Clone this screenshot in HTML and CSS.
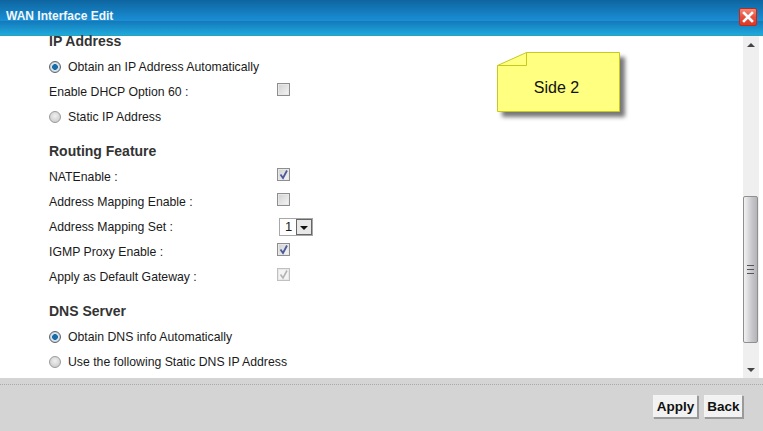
FILE: index.html
```html
<!DOCTYPE html>
<html lang="en">
<head>
  <meta charset="UTF-8" />
  <title>WAN Interface Edit</title>
  <link rel="stylesheet" href="styles.css">
</head>
<body>
  <div class="titlebar">
    <span class="title">WAN Interface Edit</span>
    <button class="close" aria-label="Close">
      <svg width="12" height="12" viewBox="0 0 12 12"><path d="M2 2 L10 10 M10 2 L2 10" stroke="#fff" stroke-width="2.6" stroke-linecap="square"/></svg>
    </button>
  </div>

  <div class="middle">
    <div class="content">
      <!-- IP Address -->
      <h2 class="first">IP Address</h2>
      <div class="row"><span class="radio on"></span><span>Obtain an IP Address Automatically</span></div>
      <div class="row"><label>Enable DHCP Option 60 :</label><span class="check"></span></div>
      <div class="row"><span class="radio"></span><span>Static IP Address</span></div>

      <!-- Routing Feature -->
      <h2>Routing Feature</h2>
      <div class="row"><label>NATEnable :</label><span class="check"><svg width="11" height="11" viewBox="0 0 11 11"><path d="M2.5 5.5 L5 9 L9 1.5" fill="none" stroke="#4a5a9a" stroke-width="1.8"/></svg></span></div>
      <div class="row"><label>Address Mapping Enable :</label><span class="check"></span></div>
      <div class="row"><label>Address Mapping Set :</label>
        <span class="select"><span class="select-val">1</span><span class="select-btn"></span></span>
      </div>
      <div class="row"><label>IGMP Proxy Enable :</label><span class="check"><svg width="11" height="11" viewBox="0 0 11 11"><path d="M2.5 5.5 L5 9 L9 1.5" fill="none" stroke="#4a5a9a" stroke-width="1.8"/></svg></span></div>
      <div class="row"><label>Apply as Default Gateway :</label><span class="check off"><svg width="11" height="11" viewBox="0 0 11 11"><path d="M2.5 5.5 L5 9 L9 1.5" fill="none" stroke="#b4b4b4" stroke-width="1.6"/></svg></span></div>

      <!-- DNS Server -->
      <h2>DNS Server</h2>
      <div class="row"><span class="radio on"></span><span>Obtain DNS info Automatically</span></div>
      <div class="row"><span class="radio"></span><span>Use the following Static DNS IP Address</span></div>

      <div class="note">
        <svg width="132" height="72" viewBox="0 0 132 72">
          <path d="M0.5 13.5 L29.5 0.5 H122.5 V59.5 H0.5 Z" fill="#ffff80" stroke="#c8c820"/>
          <path d="M0.5 13.5 H29.5 V0.5" fill="none" stroke="#c8c820"/>
        </svg>
        <span class="note-text">Side 2</span>
      </div>
    </div>

    <div class="scrollbar">
      <span class="arrow up"></span>
      <div class="thumb"><span class="grip"></span></div>
      <span class="arrow down"></span>
    </div>
  </div>

  <div class="footer">
    <button class="btn apply">Apply</button>
    <button class="btn back">Back</button>
  </div>
</body>
</html>
```

FILE: styles.css
```css
html, body {
  height: 100%;
}
body {
  margin: 0;
  width: 763px;
  height: 431px;
  overflow: hidden;
  display: flex;
  flex-direction: column;
  font-family: "Liberation Sans", Arial, sans-serif;
  font-size: 12.25px;
  color: #222;
  background: #fff;
}
.titlebar {
  height: 35px;
  flex: none;
  display: flex;
  align-items: flex-start;
  justify-content: space-between;
  padding-right: 6px;
  background: linear-gradient(#0e659f 0, #1a8fd6 21px, #1478bb 21px, #1fa9dc 35px);
  border-bottom: 1px solid #2aa3b8;
}
.title {
  margin: 9px 0 0 6px;
  font-size: 12px;
  font-weight: bold;
  color: #f2f6fa;
}
.close {
  width: 18px;
  height: 18px;
  margin-top: 8px;
  padding: 0;
  display: flex;
  align-items: center;
  justify-content: center;
  border: 1px solid #c3281c;
  border-radius: 2px;
  background: linear-gradient(#f08a78, #e8503c 50%, #d83a28);
}
.middle {
  flex: 1;
  display: flex;
  min-height: 0;
  padding-right: 4px;
}
.content {
  flex: 1;
  position: relative;
  padding: 0 0 0 49px;
}
h2 {
  margin: 11px 0 2px;
  height: 22px;
  line-height: 22px;
  font-size: 14px;
  font-weight: bold;
  color: #333;
}
h2.first {
  margin-top: -6px;
}
.row {
  height: 25px;
  display: flex;
  align-items: center;
  color: #1a1a1a;
}
.row label {
  width: 228px;
}
.radio {
  width: 12px;
  height: 12px;
  margin: 0 7px 0 0;
  box-sizing: border-box;
  border-radius: 50%;
  border: 1px solid #9a9a9a;
  background: radial-gradient(circle at 50% 40%, #f0f0f0, #c4c4c4);
}
.radio.on {
  background: radial-gradient(circle, #0f6cb0 0, #1a6ea8 2.6px, #e6ecf0 3.2px, #b4bac0 6px);
  border-color: #5c6670;
}
.check {
  width: 11px;
  height: 11px;
  margin-bottom: 4px;
  display: flex;
  border: 1px solid #8e8e8e;
  box-shadow: inset 0 0 0 1px #e8e8e8;
  background: linear-gradient(135deg, #d0d0d0, #f6f6f6);
}
.check.off {
  border-color: #c0c0c0;
  background: #f4f4f4;
}
.select {
  margin-left: 2px;
  height: 16px;
  display: flex;
  border: 1px solid #a8a8a8;
  background: #fff;
}
.select-val {
  width: 16px;
  padding-left: 5px;
  line-height: 16px;
  font-size: 13px;
  box-sizing: border-box;
}
.select-btn {
  width: 16px;
  position: relative;
  background: #e8e8e8;
  border: 1px solid #666;
  box-sizing: border-box;
}
.select-btn::after {
  content: "";
  position: absolute;
  left: 3px;
  top: 6px;
  border: 4px solid transparent;
  border-top-color: #111;
  border-bottom: 0;
}
.note {
  position: absolute;
  left: 497px;
  top: 16px;
  width: 132px;
  height: 72px;
}
.note svg {
  display: block;
  filter: drop-shadow(5px 5px 2px #777);
}
.note-text {
  position: absolute;
  left: 0;
  top: 0;
  width: 119px;
  height: 71px;
  line-height: 71px;
  text-align: center;
  font-size: 16px;
  color: #111;
}
.scrollbar {
  width: 16px;
  flex: none;
  display: flex;
  flex-direction: column;
  align-items: center;
  background: #efefef;
}
.arrow {
  width: 0;
  border: 4px solid transparent;
  flex: none;
}
.arrow.up {
  margin-top: 7px;
  border-bottom-color: #444;
  border-top: 0;
}
.arrow.down {
  margin-bottom: 6px;
  border-top-color: #444;
  border-bottom: 0;
}
.thumb {
  width: 15px;
  height: 147px;
  margin: 149px 0 25px;
  flex: none;
  align-self: flex-start;
  display: flex;
  align-items: center;
  justify-content: center;
  border: 1px solid #8f8f8f;
  border-radius: 2px;
  background: linear-gradient(90deg, #f2f2f2, #c8c8cc 60%, #b4b4b8);
  box-sizing: border-box;
}
.grip {
  width: 7px;
  height: 7px;
  border-top: 1px solid #555;
  border-bottom: 1px solid #555;
  background: linear-gradient(#555, #555) center / 100% 1px no-repeat;
  box-sizing: content-box;
}
.footer {
  height: 53px;
  flex: none;
  box-sizing: border-box;
  display: flex;
  align-items: flex-start;
  justify-content: flex-end;
  gap: 6px;
  padding: 17px 20px 0 0;
  background: linear-gradient(90deg, #aaa 1px, transparent 1px) 0 6px / 2px 1px repeat-x #d4d4d4;
}
.btn {
  height: 23px;
  padding: 0;
  font-family: "Liberation Sans", Arial, sans-serif;
  font-size: 13.5px;
  font-weight: bold;
  color: #111;
  background: #f2f2f2;
  border: 1px solid;
  border-color: #f4f4f4 #9a9a9a #9a9a9a #f4f4f4;
  box-shadow: 1px 1px 0 #9a9a9a;
}
.apply {
  width: 45px;
}
.back {
  width: 39px;
}
```
